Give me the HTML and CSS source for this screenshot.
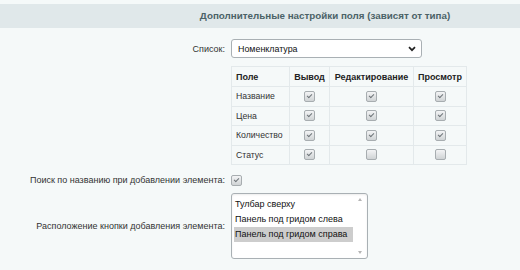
FILE: index.html
```html
<!DOCTYPE html>
<html lang="ru">
<head>
<meta charset="utf-8">
<link rel="stylesheet" href="styles.css">
</head>
<body>
<div class="page">
  <div class="heading">Дополнительные настройки поля (зависят от типа)</div>
  <div class="form">
    <div class="row row-select">
      <div class="label">Список:</div>
      <div class="field">
        <div class="select">
          <span>Номенклатура</span>
          <svg class="chev" width="8" height="6" viewBox="0 0 8 6"><path d="M1 1.2 L4 4.2 L7 1.2" fill="none" stroke="#222" stroke-width="1.7"/></svg>
        </div>
      </div>
    </div>
    <div class="row row-table">
      <div class="label"></div>
      <div class="field">
        <table class="grid">
          <colgroup><col class="k1"><col class="k2"><col class="k3"><col class="k4"></colgroup>
          <thead>
            <tr><th class="c1">Поле</th><th>Вывод</th><th>Редактирование</th><th>Просмотр</th></tr>
          </thead>
          <tbody>
            <tr><td>Название</td><td class="cb"><span class="chk on"></span></td><td class="cb"><span class="chk on"></span></td><td class="cb"><span class="chk on"></span></td></tr>
            <tr><td>Цена</td><td class="cb"><span class="chk on"></span></td><td class="cb"><span class="chk on"></span></td><td class="cb"><span class="chk on"></span></td></tr>
            <tr><td>Количество</td><td class="cb"><span class="chk on"></span></td><td class="cb"><span class="chk on"></span></td><td class="cb"><span class="chk on"></span></td></tr>
            <tr><td>Статус</td><td class="cb"><span class="chk on"></span></td><td class="cb"><span class="chk"></span></td><td class="cb"><span class="chk"></span></td></tr>
          </tbody>
        </table>
      </div>
    </div>
    <div class="row row-check">
      <div class="label">Поиск по названию при добавлении элемента:</div>
      <div class="field"><span class="chk on"></span></div>
    </div>
    <div class="row row-list">
      <div class="label">Расположение кнопки добавления элемента:</div>
      <div class="field">
        <div class="listbox">
          <div class="options">
            <div class="opt">Тулбар сверху</div>
            <div class="opt">Панель под гридом слева</div>
            <div class="opt sel">Панель под гридом справа</div>
          </div>
          <div class="scroll">
            <span class="arr up"></span>
            <span class="arr down"></span>
          </div>
        </div>
      </div>
    </div>
  </div>
</div>
</body>
</html>
```
FILE: styles.css
```css
html, body {
  margin: 0;
  padding: 0;
  background: #f5f9f9;
}
body {
  font-family: "Liberation Sans", Arial, sans-serif;
  color: #333;
  width: 520px;
  height: 270px;
  overflow: hidden;
}
.page {
  padding-top: 4px;
}
.heading {
  background: #e0e8ea;
  height: 24px;
  line-height: 24px;
  font-size: 9.8px;
  font-weight: bold;
  color: #4b6267;
  text-align: center;
  padding-left: 130px;
}
.form {
  display: flex;
  flex-direction: column;
  padding-top: 11px;
}
.row {
  display: grid;
  grid-template-columns: 225px 1fr;
  column-gap: 6px;
  align-items: center;
}
.label {
  text-align: right;
  font-size: 9px;
  color: #333;
  white-space: nowrap;
}
.row-select { height: 19px; }
.select {
  height: 17px;
  border: 1px solid #a9b0b4;
  border-radius: 3px;
  background: #fff;
  display: flex;
  align-items: center;
  justify-content: space-between;
  padding: 0 5px 0 6px;
  width: 178px;
  font-size: 8.9px;
  color: #111;
}
.row-table { margin-top: 8px; }
.grid {
  border-collapse: collapse;
  table-layout: fixed;
  width: 235px;
  font-size: 8.7px;
  color: #333;
}
.k1 { width: 58px; }
.k2 { width: 40px; }
.k3 { width: 84px; }
.k4 { width: 53px; }
.grid th, .grid td {
  border: 1px solid #e3e9eb;
  padding: 0 4px;
  white-space: nowrap;
}
.grid tbody tr { height: 19.5px; }
.grid thead tr { height: 20px; }
.grid th {
  font-weight: bold;
  font-size: 9px;
  color: #222;
  text-align: center;
  padding: 0 2px;
}
.grid th.c1 { text-align: left; padding-left: 4px; }
.grid td.cb { text-align: center; padding: 0; }
.chk {
  display: inline-block;
  width: 9px;
  height: 9px;
  border: 1px solid #a7adb0;
  border-radius: 2px;
  background: linear-gradient(#f3f4f5, #cfd3d5);
  vertical-align: middle;
  position: relative;
}
.chk.on::after {
  content: "";
  position: absolute;
  left: 2px;
  top: 2px;
  width: 4px;
  height: 2px;
  border-left: 1.2px solid #6f767a;
  border-bottom: 1.2px solid #6f767a;
  transform: rotate(-45deg);
}
.row-check { margin-top: 9px; height: 12px; }
.row-check .field { display: flex; align-items: center; }
.row-list { margin-top: 7px; }
.listbox {
  width: 135px;
  height: 64px;
  border: 1px solid #a9b0b4;
  border-radius: 3px;
  background: #fff;
  display: flex;
  box-shadow: inset 0 1px 2px rgba(0,0,0,0.08);
}
.options {
  flex: 1;
  padding: 3px 0 0 2px;
  font-size: 9px;
  color: #111;
}
.opt {
  height: 15px;
  line-height: 15px;
  padding-left: 1px;
  white-space: nowrap;
}
.opt.sel { background: #cdcdcd; }
.scroll {
  width: 14px;
  display: flex;
  flex-direction: column;
  justify-content: space-between;
  align-items: center;
  padding: 4px 0 4px;
}
.arr {
  width: 0;
  height: 0;
  border-left: 2.5px solid transparent;
  border-right: 2.5px solid transparent;
}
.arr.up { border-bottom: 3px solid #b5b5b5; }
.arr.down { border-top: 3px solid #b5b5b5; }
```
